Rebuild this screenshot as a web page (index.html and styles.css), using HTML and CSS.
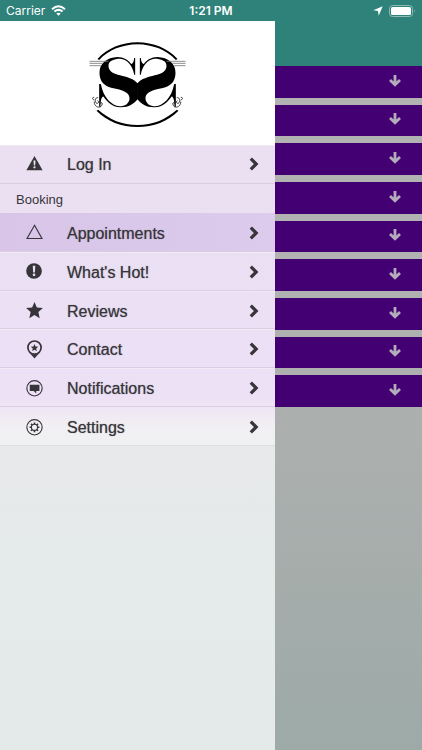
FILE: index.html
```html
<!DOCTYPE html>
<html lang="en">
<head>
<meta charset="utf-8">
<meta name="viewport" content="width=device-width, initial-scale=1">
<title>Booking</title>
<link rel="stylesheet" href="styles.css">
</head>
<body>
<svg width="0" height="0" class="defs" aria-hidden="true">
  <symbol id="chevron" viewBox="0 0 10 14"><path d="M1.800 1.600L7.200 7l-5.400 5.400" fill="none" stroke="currentColor" stroke-width="3.200"/></symbol>
  <symbol id="down" viewBox="0 0 14 14"><path d="M7 1v10M2 6l5 4.800L12 6" fill="none" stroke="currentColor" stroke-width="2.800"/></symbol>
  <symbol id="half" viewBox="0 0 172 315" overflow="visible">
    <path d="M173 160H172C150 130 85 143 85 107C85 92 102 86 120 86C142 88 158 108 162 134L165 134L165 84L162 84C161 95 158 102 153 102C145 90 130 81 112 81C80 82 58 100 58 128C58 156 74 168 96 174C126 180 150 187 148 207C146 221 135 229 118 229C95 226 70 205 62 162L57 162L57 230L61 230C61 208 66 198 70 200C84 218 98 231 120 232C145 233 160 222 172 208H173Z"/>
    <path d="M28 94H85M28 100H68M28 107H62" stroke="#777" stroke-width="2.500"/>
    <path d="M42 210C35 208 36 201 42 202M54 203C44 201 42 217 50 220C56 221 57 213 52 212M42 215C43 235 65 236 66 222C67 216 61 217 61 221" fill="none" stroke="#000" stroke-width="2.200"/>
    <path d="M52 87C82 54 124 38 172 37H173V43H172C126 44 86 59 57 90ZM49 242C80 274 124 291 172 291H173V285H172C126 285 88 269 54 239Z"/>
  </symbol>
</svg>
<header class="status">
  <div class="carrier"><span>Carrier</span>
    <svg width="15" height="11" viewBox="0 0 15 11"><path d="M1 4.200Q7.500-1.600 14 4.200M3.400 6.600Q7.500 3.200 11.600 6.600" fill="none" stroke="#fff" stroke-width="2"/><path d="M5.300 8.500Q7.500 6.800 9.700 8.500L7.500 10.700z" fill="#fff"/></svg>
  </div>
  <time>1:21 PM</time>
  <div class="power">
    <svg width="10" height="10" viewBox="0 0 10 10"><path d="M9.700.3L5.700 9.700 5 5 .3 4.300z" fill="#fff"/></svg>
    <svg width="27" height="12" viewBox="0 0 27 12"><rect x=".5" y=".5" width="23" height="11" rx="3" fill="none" stroke="#8fbbb5"/><rect x="2" y="2" width="20" height="8" rx="1.500" fill="#fff"/><path d="M25 4q1.500 2 0 4z" fill="#8fbbb5"/></svg>
  </div>
</header>
<div class="app">
  <aside class="drawer">
    <div class="brand">
      <svg viewBox="0 0 344 315" role="img" aria-label="SS logo"><use href="#half" width="172" height="315"/><use href="#half" width="172" height="315" transform="translate(344 0) scale(-1 1)"/></svg>
    </div>
    <nav>
      <a class="item login" href="#login">
        <svg class="icon" viewBox="0 0 18 18"><path d="M9 0L17.600 15H.4z" fill="currentColor"/><path d="M7.900 4.800h2.200l-.4 5.200H8.300z" fill="#eee2f4"/><circle cx="9" cy="12" r="1.200" fill="#eee2f4"/></svg>
        <span>Log In</span><svg class="chevron"><use href="#chevron"/></svg></a>
      <h2>Booking</h2>
      <div class="items">
        <a class="item active" href="#appointments">
          <svg class="icon" viewBox="0 0 18 18"><path d="M9 1.400l7.900 14H1.100z" fill="none" stroke="currentColor" stroke-width="1.200"/></svg>
          <span>Appointments</span><svg class="chevron"><use href="#chevron"/></svg></a>
        <a class="item" href="#hot">
          <svg class="icon" viewBox="0 0 18 18"><circle cx="8.500" cy="8.500" r="8.300" fill="currentColor"/><path d="M7.100 3h2.800l-.5 7H7.600z" fill="#eadff3"/><circle cx="8.500" cy="12.500" r="1.400" fill="#eadff3"/></svg>
          <span>What's Hot!</span><svg class="chevron"><use href="#chevron"/></svg></a>
        <a class="item" href="#reviews">
          <svg class="icon" viewBox="0 0 18 18"><path d="M9 0l2.500 5.800 6.400.6-4.800 4.300 1.400 6.500L9 13.800l-5.500 3.400 1.400-6.500L.1 6.400l6.400-.6z" fill="currentColor"/></svg>
          <span>Reviews</span><svg class="chevron"><use href="#chevron"/></svg></a>
        <a class="item" href="#contact">
          <svg class="icon" viewBox="0 0 18 18" overflow="visible"><circle cx="9" cy="7" r="7" fill="none" stroke="currentColor" stroke-width="1.800"/><path d="M4.500 13.400L9 18.500l4.500-5.100q-4.500 2-9 0z" fill="currentColor"/><path d="M9 3.100l1.100 2.700 2.900.2-2.200 1.900.7 2.800L9 9.200l-2.500 1.500.7-2.800L5 6l2.900-.2z" fill="currentColor"/></svg>
          <span>Contact</span><svg class="chevron"><use href="#chevron"/></svg></a>
        <a class="item" href="#notifications">
          <svg class="icon" viewBox="0 0 18 18"><circle cx="9" cy="8.800" r="8.100" fill="none" stroke="currentColor" stroke-width="1.200"/><path d="M4 5h10.200v6.600h-3.400v2.600l-2.600-2.600H4z" fill="currentColor"/></svg>
          <span>Notifications</span><svg class="chevron"><use href="#chevron"/></svg></a>
        <a class="item" href="#settings">
          <svg class="icon" viewBox="0 0 18 18" fill="none" stroke="currentColor"><circle cx="9" cy="8.800" r="8.100" stroke-width="1.200"/><circle cx="9" cy="8.800" r="3.300" stroke-width="1.200"/><path d="M9 3.600v2M9 12v2M3.800 8.800h2M12.200 8.800h2M5.300 5.100l1.400 1.400M11.300 11.100l1.400 1.400M12.700 5.100l-1.400 1.400M6.700 11.100l-1.400 1.400" stroke-width="1.700"/></svg>
          <span>Settings</span><svg class="chevron"><use href="#chevron"/></svg></a>
      </div>
    </nav>
  </aside>
  <main>
    <div class="topbar"></div>
    <div class="bars">
      <button aria-label="Expand section 1"><svg><use href="#down"/></svg></button>
      <button aria-label="Expand section 2"><svg><use href="#down"/></svg></button>
      <button aria-label="Expand section 3"><svg><use href="#down"/></svg></button>
      <button aria-label="Expand section 4"><svg><use href="#down"/></svg></button>
      <button aria-label="Expand section 5"><svg><use href="#down"/></svg></button>
      <button aria-label="Expand section 6"><svg><use href="#down"/></svg></button>
      <button aria-label="Expand section 7"><svg><use href="#down"/></svg></button>
      <button aria-label="Expand section 8"><svg><use href="#down"/></svg></button>
      <button aria-label="Expand section 9"><svg><use href="#down"/></svg></button>
    </div>
  </main>
</div>
</body>
</html>
```
FILE: styles.css
```css
* { box-sizing: border-box; }
body {
  margin: 0;
  min-height: 100vh;
  display: flex;
  flex-direction: column;
  font-family: "Liberation Sans", Arial, sans-serif;
  color: #37343a;
}
svg { display: block; flex: none; }
.defs { position: absolute; }

.status {
  display: grid;
  grid-template-columns: 1fr auto 1fr;
  align-items: center;
  height: 21px;
  padding: 0 6px;
  background: #2e8279;
  color: #fff;
  font: 12px/20px Inter, sans-serif;
}
.carrier { display: flex; align-items: center; gap: 6px; }
.status time { font-weight: 600; }
.power { display: flex; align-items: center; justify-content: flex-end; gap: 6px; }

.app { flex: 1; display: flex; }
.drawer {
  flex: none;
  width: 275px;
  background: linear-gradient(#e8e9ea 424px, #e5eaea 540px, #e4e9e9);
}
.brand {
  height: 124px;
  display: flex;
  justify-content: center;
  padding-top: 9px;
  background: #fff;
}
.brand svg { width: 115px; height: 105px; }

nav { background: linear-gradient(#eae0f1, #ebe0f5 220px, #ede2f5 255px, #f1eff3 280px, #f0f1f2); }
.item {
  display: flex;
  align-items: center;
  padding: 2px 16px 0 26px;
  border-bottom: 1px solid #d8cedf;
  box-shadow: inset 0 1px #f2eaf7;
  color: inherit;
  font-size: 16px;
  line-height: 20px;
  text-decoration: none;
}
.item span { flex: 1; padding: 2px 0 0 24px; text-shadow: 0 0 1px #37343a99; }
.login { height: 39px; padding-top: 0; }
.items { display: grid; grid-auto-rows: 1fr; height: 233px; }
.active { background: linear-gradient(90deg, #d8c5e8, #dccbed); box-shadow: none; }
.item:last-child { border-color: #dddede; box-shadow: none; }
.icon { width: 17px; height: 17px; }
.chevron { width: 10px; height: 14px; }
h2 {
  height: 29px;
  margin: 0;
  padding-left: 16px;
  font-size: 13px;
  font-weight: 400;
  line-height: 32px;
}

main { flex: 1; background: linear-gradient(#b3b3b3 0, #b1b2b2 250px, #abafae 430px, #9daaa7 100%); }
.topbar { height: 45px; background: #2e8279; }
.bars { display: grid; grid-auto-rows: 1fr; gap: 7px; height: 341px; }
.bars button {
  display: flex;
  align-items: center;
  justify-content: flex-end;
  padding: 0 20px 2px;
  border: 0;
  background: #430072;
  color: #b4abbb;
}
.bars svg { width: 14px; height: 14px; }
```
